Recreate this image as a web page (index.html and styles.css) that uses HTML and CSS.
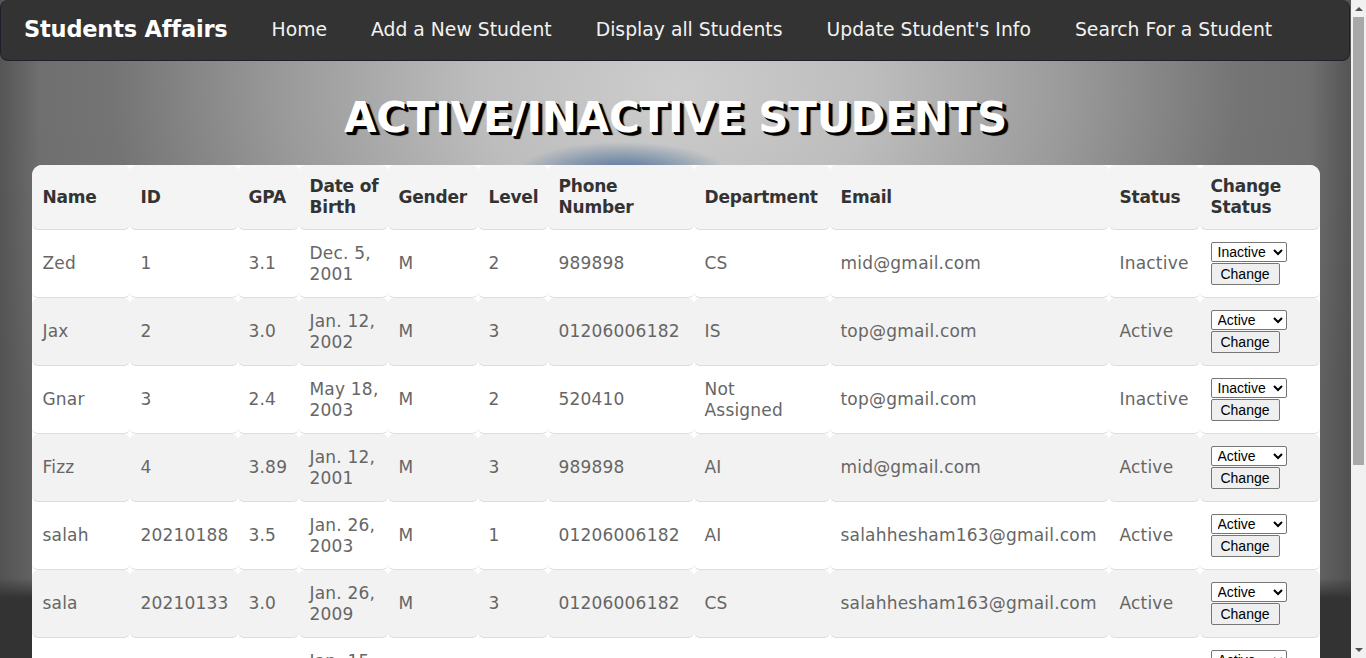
FILE: index.html
```html
<!DOCTYPE html>
<html lang="en">
<head>
<meta charset="utf-8">
<title>Active/Inactive Students</title>
<link rel="stylesheet" href="styles.css">
</head>
<body>
<div class="viewport">
<div class="content">
<nav class="navbar">
  <a class="brand" href="#">Students Affairs</a>
  <a class="nav-link" href="#">Home</a>
  <a class="nav-link" href="#">Add a New Student</a>
  <a class="nav-link" href="#">Display all Students</a>
  <a class="nav-link" href="#">Update Student's Info</a>
  <a class="nav-link" href="#">Search For a Student</a>
</nav>
<main class="page">
  <h1 class="title">ACTIVE/INACTIVE STUDENTS</h1>
  <table class="students">
    <colgroup>
      <col class="c-name"><col class="c-id"><col class="c-gpa"><col class="c-dob"><col class="c-gender"><col class="c-level"><col class="c-phone"><col class="c-dept"><col class="c-email"><col class="c-status"><col class="c-change">
    </colgroup>
    <thead>
      <tr><th>Name</th><th>ID</th><th>GPA</th><th>Date of Birth</th><th>Gender</th><th>Level</th><th>Phone Number</th><th>Department</th><th>Email</th><th>Status</th><th>Change Status</th></tr>
    </thead>
    <tbody>
      <tr><td>Zed</td><td>1</td><td>3.1</td><td>Dec. 5, 2001</td><td>M</td><td>2</td><td>989898</td><td class="dept">CS</td><td>mid@gmail.com</td><td>Inactive</td><td><form class="status-form"><select><option>Active</option><option selected>Inactive</option></select><button type="button">Change</button></form></td></tr>
      <tr><td>Jax</td><td>2</td><td>3.0</td><td>Jan. 12, 2002</td><td>M</td><td>3</td><td>01206006182</td><td class="dept">IS</td><td>top@gmail.com</td><td>Active</td><td><form class="status-form"><select><option selected>Active</option><option>Inactive</option></select><button type="button">Change</button></form></td></tr>
      <tr><td>Gnar</td><td>3</td><td>2.4</td><td>May 18, 2003</td><td>M</td><td>2</td><td>520410</td><td class="dept">Not Assigned</td><td>top@gmail.com</td><td>Inactive</td><td><form class="status-form"><select><option>Active</option><option selected>Inactive</option></select><button type="button">Change</button></form></td></tr>
      <tr><td>Fizz</td><td>4</td><td>3.89</td><td>Jan. 12, 2001</td><td>M</td><td>3</td><td>989898</td><td class="dept">AI</td><td>mid@gmail.com</td><td>Active</td><td><form class="status-form"><select><option selected>Active</option><option>Inactive</option></select><button type="button">Change</button></form></td></tr>
      <tr><td>salah</td><td>20210188</td><td>3.5</td><td>Jan. 26, 2003</td><td>M</td><td>1</td><td>01206006182</td><td class="dept">AI</td><td>salahhesham163@gmail.com</td><td>Active</td><td><form class="status-form"><select><option selected>Active</option><option>Inactive</option></select><button type="button">Change</button></form></td></tr>
      <tr><td>sala</td><td>20210133</td><td>3.0</td><td>Jan. 26, 2009</td><td>M</td><td>3</td><td>01206006182</td><td class="dept">CS</td><td>salahhesham163@gmail.com</td><td>Active</td><td><form class="status-form"><select><option selected>Active</option><option>Inactive</option></select><button type="button">Change</button></form></td></tr>
      <tr><td>Ahri</td><td>20210145</td><td>3.2</td><td>Jan. 15, 2002</td><td>F</td><td>2</td><td>01206006182</td><td class="dept">IS</td><td>ahri@gmail.com</td><td>Active</td><td><form class="status-form"><select><option selected>Active</option><option>Inactive</option></select><button type="button">Change</button></form></td></tr>
    </tbody>
  </table>
</main>
</div>
</div>
<div class="scrollbar" aria-hidden="true">
  <div class="sb-btn sb-up"></div>
  <div class="sb-track"><div class="sb-thumb"></div></div>
  <div class="sb-btn sb-down"></div>
</div>
</body>
</html>
```
FILE: styles.css
```css
* { box-sizing: border-box; }
html, body { margin: 0; height: 100%; background: #333333; overflow: hidden; }
body {
  display: flex;
  font-family: "DejaVu Sans", "Open Sans", sans-serif;
}
.viewport {
  flex: 1;
  min-width: 0;
  height: 100vh;
  overflow: hidden;
}
.scrollbar {
  width: 15px;
  flex: none;
  height: 100vh;
  display: flex;
  flex-direction: column;
  background: #f1f1f1;
}
.sb-btn {
  height: 17px;
  flex: none;
  display: flex;
  align-items: center;
  justify-content: center;
}
.sb-up::before {
  content: "";
  border-left: 4px solid transparent;
  border-right: 4px solid transparent;
  border-bottom: 4px solid #505050;
}
.sb-down::before {
  content: "";
  border-left: 4px solid transparent;
  border-right: 4px solid transparent;
  border-top: 4px solid #505050;
}
.sb-track { flex: 1; padding: 0 2px; }
.sb-thumb { height: 448px; background: #a8a8a8; }
.content {
  min-height: 100%;
  background:
    linear-gradient(to bottom, rgba(51,51,51,0) 0, rgba(51,51,51,0) 578px, #333333 598px, #333333 100%),
    radial-gradient(ellipse 105px 30px at 622px 172px, rgba(58,88,148,0.8), rgba(70,110,150,0.4) 60%, rgba(70,110,150,0) 100%),
    linear-gradient(to right, rgba(70,70,70,0.6) 0, rgba(70,70,70,0) 40px, rgba(70,70,70,0) 1310px, rgba(60,60,60,0.5) 1351px),
    radial-gradient(ellipse 58% 75% at 50% 12%, #cdcdcd 0%, #bdbdbd 25%, #9a9a9a 50%, #747474 72%, #666666 100%);
  background-repeat: no-repeat;
}
.navbar {
  display: flex;
  align-items: center;
  gap: 44px;
  height: 61px;
  margin-right: 1px;
  padding: 0 0 2px 23px;
  background: #333333;
  border: 1px solid #1c2029;
  border-top: none;
  border-radius: 8px;
}
.brand {
  color: #ffffff;
  text-decoration: none;
  font-weight: bold;
  font-size: 22.5px;
  letter-spacing: -0.2px;
}
.nav-link {
  color: #f2f2f2;
  text-decoration: none;
  font-size: 18.8px;
}
.page {
  padding: 23px 0 32px;
}
.title {
  margin: 0 0 14px;
  text-align: center;
  color: #ffffff;
  font-size: 42px;
  line-height: 67px;
  font-weight: 900;
  letter-spacing: -0.25px;
  text-shadow: 3px 3px 0 #000000, 2px 2px 0 #000000, 4px 3px 1px #000000;
}
.students {
  margin: 0 auto;
  width: 1288px;
  table-layout: fixed;
  border-collapse: separate;
  border-spacing: 0;
  background: #ffffff;
  border-radius: 10px;
}
.c-name { width: 98px; }
.c-id { width: 108px; }
.c-gpa { width: 61px; }
.c-dob { width: 89px; }
.c-gender { width: 90px; }
.c-level { width: 70px; }
.c-phone { width: 146px; }
.c-dept { width: 136px; }
.c-email { width: 279px; }
.c-status { width: 91px; }
.c-change { width: 120px; }
.students th,
.students td {
  text-align: left;
  vertical-align: middle;
  padding: 0 4px 0 11px;
  line-height: 21px;
  border-bottom: 1px solid #dddddd;
  border-radius: 6px;
}
.students td.dept { padding-right: 16px; }
.students th {
  height: 65px;
  background: #f4f4f4;
  color: #333333;
  font-weight: bold;
  font-size: 17px;
  letter-spacing: -0.2px;
}
.students thead th:first-child { border-top-left-radius: 10px; }
.students thead th:last-child { border-top-right-radius: 10px; }
.students td {
  height: 68px;
  color: #666666;
  font-size: 17px;
  letter-spacing: 0.2px;
}
.students tbody tr:nth-child(even) td { background: #f2f2f2; }
.status-form {
  display: flex;
  flex-direction: column;
  align-items: flex-start;
  gap: 1px;
  margin: 0;
}
.status-form select {
  width: 76px;
  height: 20px;
  font-family: "Liberation Sans", Arial, sans-serif;
  font-size: 14px;
  letter-spacing: 0;
  color: #000;
  background: #fff;
  border: 1px solid #767676;
  border-radius: 2px;
  padding: 0 0 0 2px;
}
.status-form button {
  width: 69px;
  height: 22px;
  font-family: "Liberation Sans", Arial, sans-serif;
  font-size: 14px;
  letter-spacing: 0;
  color: #000;
  background: #efefef;
  border: 1px solid #767676;
  border-radius: 2px;
  padding: 0 6px;
}
```
